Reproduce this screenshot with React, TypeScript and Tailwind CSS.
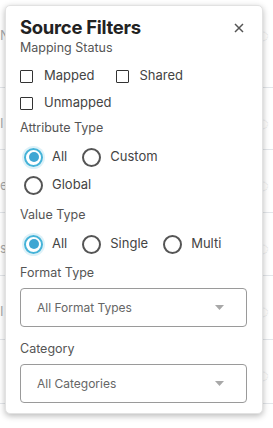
import React from "react";

const font = { fontFamily: "Inter, 'Open Sans', sans-serif" };

function Checkbox({ label }: { label: string }) {
  return (
    <label className="flex items-center gap-[11px] h-5">
      <span className="w-[13px] h-[13px] border-[1.5px] border-[#333] rounded-[1px] bg-white" />
      <span className="text-[13px] text-[#444]">{label}</span>
    </label>
  );
}

function Radio({ label, checked }: { label: string; checked?: boolean }) {
  return (
    <label className="flex items-center gap-[9px] h-[22px]">
      {checked ? (
        <span className="w-[19px] h-[19px] rounded-full border-2 border-[#45b3d8] flex items-center justify-center shadow-[0_0_0_2px_rgba(69,179,216,0.18)]">
          <span className="w-[10px] h-[10px] rounded-full bg-[#3fa6d3]" />
        </span>
      ) : (
        <span className="w-[19px] h-[19px] rounded-full border-2 border-[#555]" />
      )}
      <span className="text-[13px] text-[#444]">{label}</span>
    </label>
  );
}

function Select({ value }: { value: string }) {
  return (
    <div className="h-[39px] w-[227px] border border-[#9a9a9a] rounded-[4px] flex items-center justify-between pl-4 pr-[22px]">
      <span className="text-[12px] text-[#666]">{value}</span>
      <svg width="9" height="5" viewBox="0 0 9 5">
        <path d="M0 0 L9 0 L4.5 5 Z" fill="#a8a8a8" />
      </svg>
    </div>
  );
}

function Label({ text, className }: { text: string; className?: string }) {
  return (
    <div className={"h-[17px] flex items-center text-[12.5px] text-[#555] " + (className ?? "")}>
      {text}
    </div>
  );
}

export default function App() {
  const rows = [
    { t: "N", h: 88 },
    { t: "I", h: 62 },
    { t: "e", h: 63 },
    { t: "s", h: 63 },
    { t: "I", h: 64 },
    { t: "", h: 64 },
  ];
  return (
    <div className="relative w-[273px] h-[428px] bg-white overflow-hidden" style={font}>
      {/* background table */}
      <div className="flex flex-col">
        {rows.map((r, i) => (
          <div
            key={i}
            className="flex justify-between border-b border-[#e3e6ea] text-[#aaa] text-[13px]"
            style={{ height: r.h }}
          >
            <span className="pt-[26px] pl-0">{r.t}</span>
            <span className="pt-[20px] pr-1 text-[#e6e6e6] text-[20px]">◌</span>
          </div>
        ))}
      </div>

      {/* popover */}
      <div className="absolute left-[5px] top-[5px] w-[258px] h-[409px] bg-white rounded-[5px] border border-[#e2e2e2] shadow-[0_2px_6px_rgba(0,0,0,0.28)] px-[14px] pt-[11px]">
        <div className="flex items-center justify-between h-[22px]">
          <span className="text-[18.5px] font-bold text-[#222] tracking-[-0.3px]">Source Filters</span>
          <svg width="10" height="10" viewBox="0 0 10 10" className="mr-[4px]">
            <path d="M1 1 L9 9 M9 1 L1 9" stroke="#555" strokeWidth="1.5" />
          </svg>
        </div>

        <Label text="Mapping Status" className="mt-[1px]" />
        <div className="flex gap-[21px] mt-[9px]">
          <Checkbox label="Mapped" />
          <Checkbox label="Shared" />
        </div>
        <div className="mt-[7px]">
          <Checkbox label="Unmapped" />
        </div>

        <Label text="Attribute Type" className="mt-[7px]" />
        <div className="flex gap-[15px] mt-[9px] pl-1">
          <Radio label="All" checked />
          <Radio label="Custom" />
        </div>
        <div className="mt-[6px] pl-1">
          <Radio label="Global" />
        </div>

        <Label text="Value Type" className="mt-[11px]" />
        <div className="flex gap-[15px] mt-[9px] pl-1">
          <Radio label="All" checked />
          <Radio label="Single" />
          <Radio label="Multi" />
        </div>

        <Label text="Format Type" className="mt-[10px]" />
        <div className="mt-[6px]">
          <Select value="All Format Types" />
        </div>

        <Label text="Category" className="mt-[14px]" />
        <div className="mt-[6px]">
          <Select value="All Categories" />
        </div>
      </div>
    </div>
  );
}
